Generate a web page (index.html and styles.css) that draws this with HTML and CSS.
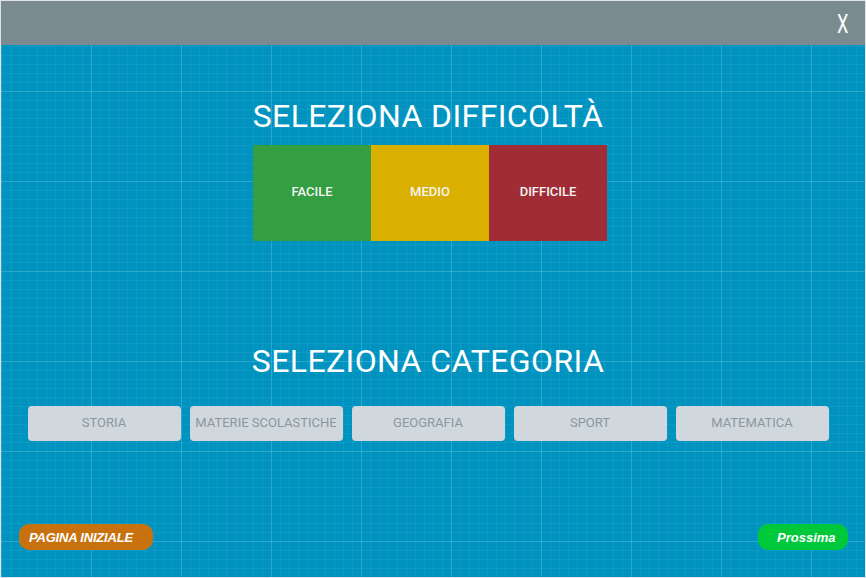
FILE: index.html
```html
<!DOCTYPE html>
<html lang="it">
<head>
<meta charset="utf-8">
<title>Quiz</title>
<link rel="stylesheet" href="styles.css">
</head>
<body>
<div class="frame">
  <header class="topbar">
    <span class="close">X</span>
  </header>
  <main class="content">
    <h1 class="title title-diff">SELEZIONA DIFFICOLTÀ</h1>
    <div class="levels">
      <div class="level facile">FACILE</div>
      <div class="level medio">MEDIO</div>
      <div class="level difficile">DIFFICILE</div>
    </div>
    <h1 class="title title-cat">SELEZIONA CATEGORIA</h1>
    <div class="cats">
      <div class="cat">STORIA</div>
      <div class="cat">MATERIE SCOLASTICHE</div>
      <div class="cat">GEOGRAFIA</div>
      <div class="cat">SPORT</div>
      <div class="cat">MATEMATICA</div>
    </div>
  </main>
  <footer class="footer">
    <div class="pill home">PAGINA INIZIALE</div>
    <div class="pill next">Prossima</div>
  </footer>
</div>
</body>
</html>
```
FILE: styles.css
```css
html, body {
  margin: 0;
  padding: 0;
}
body {
  width: 866px;
  height: 578px;
  overflow: hidden;
  font-family: Roboto, "Liberation Sans", sans-serif;
}
.frame {
  box-sizing: border-box;
  width: 866px;
  height: 578px;
  border: 1px solid #dfe3e5;
  display: flex;
  flex-direction: column;
  background-color: #0093bf;
  background-image:
    linear-gradient(rgba(255,255,255,0.13) 1px, transparent 1px),
    linear-gradient(90deg, rgba(255,255,255,0.13) 1px, transparent 1px),
    linear-gradient(rgba(255,255,255,0.05) 1px, transparent 1px),
    linear-gradient(90deg, rgba(255,255,255,0.05) 1px, transparent 1px);
  background-size: 90px 90px, 90px 90px, 9px 9px, 9px 9px;
  background-position: 0 0, 0 0, 0 0, 0 0;
}
.topbar {
  height: 44px;
  background: #7a8b8f;
  display: flex;
  justify-content: flex-end;
  align-items: center;
  padding-right: 17px;
}
.close {
  color: #ffffff;
  font-size: 26px;
  line-height: 26px;
  font-weight: 400;
  display: inline-block;
  transform: scaleX(0.7);
  transform-origin: right center;
  margin-top: 1px;
}
.content {
  display: flex;
  flex-direction: column;
  align-items: center;
  padding-right: 10px;
}
.title {
  margin: 0;
  color: #ffffff;
  font-weight: 400;
  font-size: 32px;
  line-height: 37px;
  letter-spacing: 0.4px;
}
.title-diff {
  margin-top: 53px;
}
.levels {
  display: flex;
  margin-top: 10px;
  margin-left: 4px;
}
.level {
  width: 118px;
  height: 96px;
  box-sizing: border-box;
  padding-bottom: 4px;
  display: flex;
  align-items: center;
  justify-content: center;
  color: #f4f4f4;
  font-size: 13px;
  font-weight: 500;
}
.facile { background: #339e42; }
.medio { background: #d9af00; }
.difficile { background: #a02d35; }
.title-cat {
  margin-top: 102px;
}
.cats {
  display: flex;
  gap: 9px;
  margin-top: 26px;
}
.cat {
  width: 153px;
  height: 35px;
  box-sizing: border-box;
  border-radius: 4px;
  background: #d0d8de;
  color: #8a979e;
  font-size: 13px;
  padding-bottom: 2px;
  display: flex;
  align-items: center;
  justify-content: center;
}
.footer {
  margin-top: auto;
  display: flex;
  justify-content: space-between;
  align-items: center;
  padding: 0 17px 27px 18px;
}
.pill {
  height: 26px;
  border-radius: 10px;
  color: #ffffff;
  font-family: "Liberation Sans", Arial, sans-serif;
  font-weight: 700;
  font-style: italic;
  font-size: 13px;
  display: flex;
  align-items: center;
  box-sizing: border-box;
}
.home {
  background: #c7720f;
  width: 134px;
  padding-left: 10px;
  letter-spacing: -0.2px;
}
.next {
  background: #00c83b;
  width: 90px;
  padding-left: 19px;
}
```
